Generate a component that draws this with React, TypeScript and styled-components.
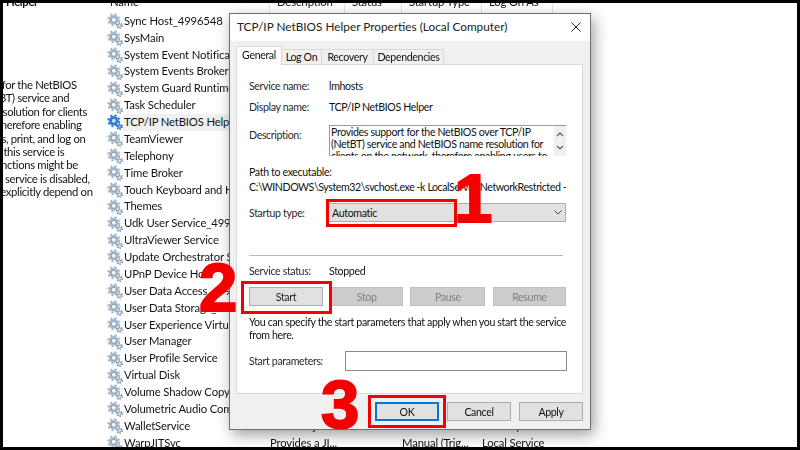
import React from 'react';
import styled, { createGlobalStyle } from 'styled-components';

const services = [
  { name: 'Sync Host_4996548' },
  { name: 'SysMain' },
  { name: 'System Event Notification Service' },
  { name: 'System Events Broker' },
  { name: 'System Guard Runtime Monitor Broker' },
  { name: 'Task Scheduler' },
  { name: 'TCP/IP NetBIOS Helper', selected: true },
  { name: 'TeamViewer' },
  { name: 'Telephony' },
  { name: 'Time Broker' },
  { name: 'Touch Keyboard and Handwriting Panel Service' },
  { name: 'Themes' },
  { name: 'Udk User Service_4996548' },
  { name: 'UltraViewer Service' },
  { name: 'Update Orchestrator Service' },
  { name: 'UPnP Device Host' },
  { name: 'User Data Access_4996548' },
  { name: 'User Data Storage_4996548' },
  { name: 'User Experience Virtualization Service' },
  { name: 'User Manager' },
  { name: 'User Profile Service' },
  { name: 'Virtual Disk' },
  { name: 'Volume Shadow Copy' },
  { name: 'Volumetric Audio Composition Service' },
  { name: 'WalletService', desc: 'Hosts objects...', startup: 'Manual', logOn: 'Local System' },
  { name: 'WarpJITSvc', desc: 'Provides a JI...', startup: 'Manual (Trig...', logOn: 'Local Service' },
];

const paneLines = [
  'Provides support for the NetBIOS',
  'over TCP/IP (NetBT) service and',
  'NetBIOS name resolution for clients',
  'on the network, therefore enabling',
  'users to share files, print, and log on',
  'to the network. If this service is',
  'stopped, these functions might be',
  'unavailable. If this service is disabled,',
  'any services that explicitly depend on',
];

const GlobalStyle = createGlobalStyle`
  html, body {
    margin: 0;
    padding: 0;
    background: #000;
  }
`;

const Frame = styled.div`
  position: relative;
  box-sizing: border-box;
  width: 800px;
  height: 450px;
  border: 3px solid #000;
  background: #fff;
  overflow: hidden;
  font-family: Lato, 'Noto Sans', sans-serif;
  font-size: 11.3px;
  color: #141414;
`;

const Backdrop = styled.div`
  display: flex;
  margin-top: -9px;
  letter-spacing: -0.15px;
  filter: blur(0.35px);
`;

const DetailPane = styled.div`
  width: 104px;
  flex: none;
  overflow: hidden;
  letter-spacing: -0.35px;
`;

const PaneTitle = styled.div`
  margin-top: -16px;
  padding-left: 3px;
  font-weight: 700;
  line-height: 16px;
`;

const PaneBody = styled.div`
  margin: 68px 0 0 -82px;
  width: 220px;
  line-height: 13.4px;
`;

const PaneLine = styled.div`
  white-space: nowrap;
`;

const Table = styled.div`
  display: grid;
  grid-template-columns: 163px 75px 57px 80px 71px;
  grid-template-rows: 18.8px;
  grid-auto-rows: 16.88px;
`;

const HeadCell = styled.div`
  box-sizing: border-box;
  padding-left: ${(p: { $first?: boolean }) => (p.$first ? '3px' : '7px')};
  border-right: 1px solid #e5e5e5;
  line-height: 15px;
`;

const Cell = styled.div`
  white-space: nowrap;
  overflow: hidden;
  line-height: 16.88px;
`;

const NameCell = styled(Cell)`
  display: flex;
  align-items: center;
`;

const NameText = styled.span<{ $selected?: boolean }>`
  flex: 1;
  padding-left: 1px;
  background: ${(p) => (p.$selected ? '#f0f0f0' : 'transparent')};
`;

const GearMark = styled.svg`
  flex: none;
  width: 16px;
  height: 16px;
`;

const Gear = ({ selected }: { selected?: boolean }) => {
  const main = selected ? '#2f80d8' : '#a6b8c9';
  const dark = selected ? '#1c5aa6' : '#6d8296';
  const hole = selected ? '#c4dcf4' : '#f2f6fa';
  return (
    <GearMark viewBox="0 0 16 16">
      <circle cx="6.8" cy="6.8" r="5.5" fill="none" stroke={main} strokeWidth="2" strokeDasharray="2.2 2.12" />
      <circle cx="6.8" cy="6.8" r="4.8" fill={main} />
      <circle cx="6.8" cy="6.8" r="2.5" fill={hole} stroke={dark} strokeWidth="0.7" />
      <circle cx="12.6" cy="12.6" r="2.6" fill="none" stroke={dark} strokeWidth="1.4" strokeDasharray="1.4 1.32" />
      <circle cx="12.6" cy="12.6" r="2.2" fill={main} />
      <circle cx="12.6" cy="12.6" r="0.9" fill={hole} />
    </GearMark>
  );
};

const Dialog = styled.div`
  position: absolute;
  left: 226px;
  top: 10px;
  box-sizing: border-box;
  width: 362px;
  height: 417px;
  display: flex;
  flex-direction: column;
  border: 1px solid #6f6f6f;
  background: #f0f0f0;
  box-shadow: 3px 5px 14px rgba(0, 0, 0, 0.38);
  font-size: 10.6px;
  letter-spacing: -0.35px;
  color: #111;
  filter: blur(0.3px);
`;

const TitleBar = styled.div`
  flex: none;
  height: 27px;
  display: flex;
  align-items: center;
  justify-content: space-between;
  padding: 0 9px 2px 7px;
  box-sizing: border-box;
  background: #fff;
`;

const TitleText = styled.span`
  font-size: 11.8px;
  letter-spacing: 0;
  color: #222;
`;

const CloseIcon = styled.svg`
  width: 10px;
  height: 10px;
`;

const TabStrip = styled.div`
  flex: none;
  display: flex;
  align-items: flex-end;
  height: 24px;
  padding-left: 6px;
  margin-bottom: -1px;
`;

const Tab = styled.div<{ $active?: boolean; $width: number }>`
  position: relative;
  box-sizing: border-box;
  width: ${(p) => p.$width}px;
  height: ${(p) => (p.$active ? '19px' : '16px')};
  padding-bottom: ${(p) => (p.$active ? '3px' : '0')};
  display: flex;
  align-items: center;
  justify-content: center;
  border: 1px solid #d9d9d9;
  border-bottom: ${(p) => (p.$active ? 'none' : '1px solid #d9d9d9')};
  border-left-width: ${(p) => (p.$active ? '1px' : '0')};
  background: ${(p) => (p.$active ? '#fff' : '#f0f0f0')};
  z-index: ${(p) => (p.$active ? 1 : 0)};
`;

const Panel = styled.div`
  box-sizing: border-box;
  flex: none;
  width: 347px;
  height: 330px;
  margin-left: 6px;
  padding: 10px 16px 0 12px;
  background: #fff;
  border: 1px solid #d9d9d9;
`;

const InfoRow = styled.div`
  display: grid;
  grid-template-columns: 80px 1fr;
  height: 21px;
  align-items: center;
`;

const DescriptionRow = styled.div`
  display: grid;
  grid-template-columns: 80px 1fr;
  height: 30px;
  margin-top: 8px;
  align-items: start;
`;

const FieldLabel = styled.span`
  color: #2a2a2a;
`;

const DescriptionLabel = styled(FieldLabel)`
  margin-top: 4px;
`;

const DescriptionBox = styled.div`
  display: flex;
  height: 30px;
  overflow: hidden;
  border-top: 1px solid #9a9a9a;
  border-left: 1px solid #9a9a9a;
`;

const DescriptionText = styled.div`
  flex: 1;
  padding: 0 1px;
  line-height: 12px;
`;

const Scrollbar = styled.div`
  flex: none;
  width: 12px;
  background: #f0f0f0;
  display: flex;
  flex-direction: column;
  align-items: center;
  justify-content: space-around;
  padding: 2px 0;
  box-sizing: border-box;
`;

const Chevron = styled.svg`
  width: 8px;
  height: 5px;
`;

const PathLabel = styled.div`
  margin-top: 10px;
  height: 14px;
  line-height: 14px;
`;

const PathValue = styled.div`
  height: 14px;
  margin-top: 1px;
  line-height: 14px;
  letter-spacing: -0.42px;
  white-space: nowrap;
  overflow: hidden;
`;

const StartupRow = styled.div`
  display: grid;
  grid-template-columns: 78px 1fr;
  align-items: center;
  margin-top: 9px;
`;

const SelectBox = styled.div`
  box-sizing: border-box;
  height: 19px;
  display: flex;
  align-items: center;
  justify-content: space-between;
  padding: 0 3px 0 4px;
  background: #e1e1e1;
  border: 1px solid #adadad;
`;

const Divider = styled.div`
  height: 1px;
  width: 314px;
  margin-top: 33px;
  background: #b8b8b8;
`;

const StatusRow = styled.div`
  display: grid;
  grid-template-columns: 80px 1fr;
  margin-top: 8px;
  height: 14px;
  line-height: 14px;
`;

const ControlRow = styled.div`
  display: grid;
  grid-template-columns: 74px 72px 75px 73px;
  justify-content: space-between;
  margin-top: 9px;
  width: 317px;
`;

const ServiceButton = styled.div<{ $disabled?: boolean }>`
  box-sizing: border-box;
  height: 19px;
  display: flex;
  align-items: center;
  justify-content: center;
  background: ${(p) => (p.$disabled ? '#cccccc' : '#e1e1e1')};
  border: 1px solid ${(p) => (p.$disabled ? '#bfbfbf' : '#adadad')};
  color: ${(p) => (p.$disabled ? '#808080' : '#1c1c1c')};
`;

const HelpText = styled.div`
  margin-top: 10px;
  line-height: 12.5px;
  width: 317px;
`;

const ParamsRow = styled.div`
  display: grid;
  grid-template-columns: 96px 222px;
  align-items: center;
  margin-top: 10px;
`;

const ParamsInput = styled.div`
  box-sizing: border-box;
  height: 20px;
  background: #fff;
  border: 1px solid #8a8a8a;
`;

const Footer = styled.div`
  flex: 1;
  display: flex;
  justify-content: flex-end;
  gap: 8px;
  padding: 8px 7px 0 0;
`;

const FooterButton = styled.div<{ $primary?: boolean }>`
  box-sizing: border-box;
  width: 64px;
  height: 19px;
  display: flex;
  align-items: center;
  justify-content: center;
  background: #e1e1e1;
  border: ${(p) => (p.$primary ? '2px solid #0078d7' : '1px solid #adadad')};
`;

const Highlight = styled.div<{ $x: number; $y: number; $w: number; $h: number }>`
  position: absolute;
  left: ${(p) => p.$x - 3}px;
  top: ${(p) => p.$y - 3}px;
  box-sizing: border-box;
  width: ${(p) => p.$w}px;
  height: ${(p) => p.$h}px;
  border: 3px solid #f40000;
`;

const StepNumber = styled.div<{ $x: number; $y: number }>`
  position: absolute;
  left: ${(p) => p.$x - 3}px;
  top: ${(p) => p.$y - 3}px;
  font-family: 'Liberation Sans', Arial, sans-serif;
  font-size: 69px;
  font-weight: 700;
  line-height: 69px;
  color: #f40000;
  -webkit-text-stroke: 2px #f40000;
`;

const App = () => {
  return (
    <>
      <GlobalStyle />
      <Frame>
        <Backdrop>
          <DetailPane>
            <PaneTitle>
              <div>TCP/IP NetBIOS</div>
              <div>Helper</div>
            </PaneTitle>
            <PaneBody>
              {paneLines.map((line) => (
                <PaneLine key={line}>{line}</PaneLine>
              ))}
            </PaneBody>
          </DetailPane>
          <Table>
            <HeadCell $first>Name</HeadCell>
            <HeadCell>Description</HeadCell>
            <HeadCell>Status</HeadCell>
            <HeadCell>Startup Type</HeadCell>
            <HeadCell>Log On As</HeadCell>
            {services.map((s) => (
              <React.Fragment key={s.name}>
                <NameCell>
                  <Gear selected={s.selected} />
                  <NameText $selected={s.selected}>{s.name}</NameText>
                </NameCell>
                <Cell>{s.desc}</Cell>
                <Cell />
                <Cell>{s.startup}</Cell>
                <Cell>{s.logOn}</Cell>
              </React.Fragment>
            ))}
          </Table>
        </Backdrop>

        <Dialog>
          <TitleBar>
            <TitleText>TCP/IP NetBIOS Helper Properties (Local Computer)</TitleText>
            <CloseIcon viewBox="0 0 10 10">
              <path d="M0.5 0.5 L9.5 9.5 M9.5 0.5 L0.5 9.5" stroke="#222" strokeWidth="1" fill="none" />
            </CloseIcon>
          </TitleBar>
          <TabStrip>
            <Tab $active $width={46}>General</Tab>
            <Tab $width={40}>Log On</Tab>
            <Tab $width={52}>Recovery</Tab>
            <Tab $width={70}>Dependencies</Tab>
          </TabStrip>
          <Panel>
            <InfoRow>
              <FieldLabel>Service name:</FieldLabel>
              <span>lmhosts</span>
            </InfoRow>
            <InfoRow>
              <FieldLabel>Display name:</FieldLabel>
              <span>TCP/IP NetBIOS Helper</span>
            </InfoRow>
            <DescriptionRow>
              <DescriptionLabel>Description:</DescriptionLabel>
              <DescriptionBox>
                <DescriptionText>
                  Provides support for the NetBIOS over TCP/IP (NetBT) service and NetBIOS name resolution for clients on the network, therefore enabling users to
                </DescriptionText>
                <Scrollbar>
                  <Chevron viewBox="0 0 8 5">
                    <path d="M1 4 L4 1 L7 4" stroke="#555" strokeWidth="1.1" fill="none" />
                  </Chevron>
                  <Chevron viewBox="0 0 8 5">
                    <path d="M1 1 L4 4 L7 1" stroke="#555" strokeWidth="1.1" fill="none" />
                  </Chevron>
                </Scrollbar>
              </DescriptionBox>
            </DescriptionRow>
            <PathLabel>Path to executable:</PathLabel>
            <PathValue>C:\WINDOWS\System32\svchost.exe -k LocalServiceNetworkRestricted -p</PathValue>
            <StartupRow>
              <FieldLabel>Startup type:</FieldLabel>
              <SelectBox>
                <span>Automatic</span>
                <Chevron viewBox="0 0 8 5">
                  <path d="M0.5 0.5 L4 4 L7.5 0.5" stroke="#444" strokeWidth="1" fill="none" />
                </Chevron>
              </SelectBox>
            </StartupRow>
            <Divider />
            <StatusRow>
              <FieldLabel>Service status:</FieldLabel>
              <span>Stopped</span>
            </StatusRow>
            <ControlRow>
              <ServiceButton>Start</ServiceButton>
              <ServiceButton $disabled>Stop</ServiceButton>
              <ServiceButton $disabled>Pause</ServiceButton>
              <ServiceButton $disabled>Resume</ServiceButton>
            </ControlRow>
            <HelpText>You can specify the start parameters that apply when you start the service from here.</HelpText>
            <ParamsRow>
              <FieldLabel>Start parameters:</FieldLabel>
              <ParamsInput />
            </ParamsRow>
          </Panel>
          <Footer>
            <FooterButton $primary>OK</FooterButton>
            <FooterButton>Cancel</FooterButton>
            <FooterButton>Apply</FooterButton>
          </Footer>
        </Dialog>

        <Highlight $x={326} $y={199} $w={131} $h={28} />
        <Highlight $x={241} $y={281} $w={91} $h={33} />
        <Highlight $x={368} $y={395} $w={78} $h={33} />
        <StepNumber $x={454} $y={164}>1</StepNumber>
        <StepNumber $x={199} $y={253}>2</StepNumber>
        <StepNumber $x={321} $y={370}>3</StepNumber>
      </Frame>
    </>
  );
};

export default App;
